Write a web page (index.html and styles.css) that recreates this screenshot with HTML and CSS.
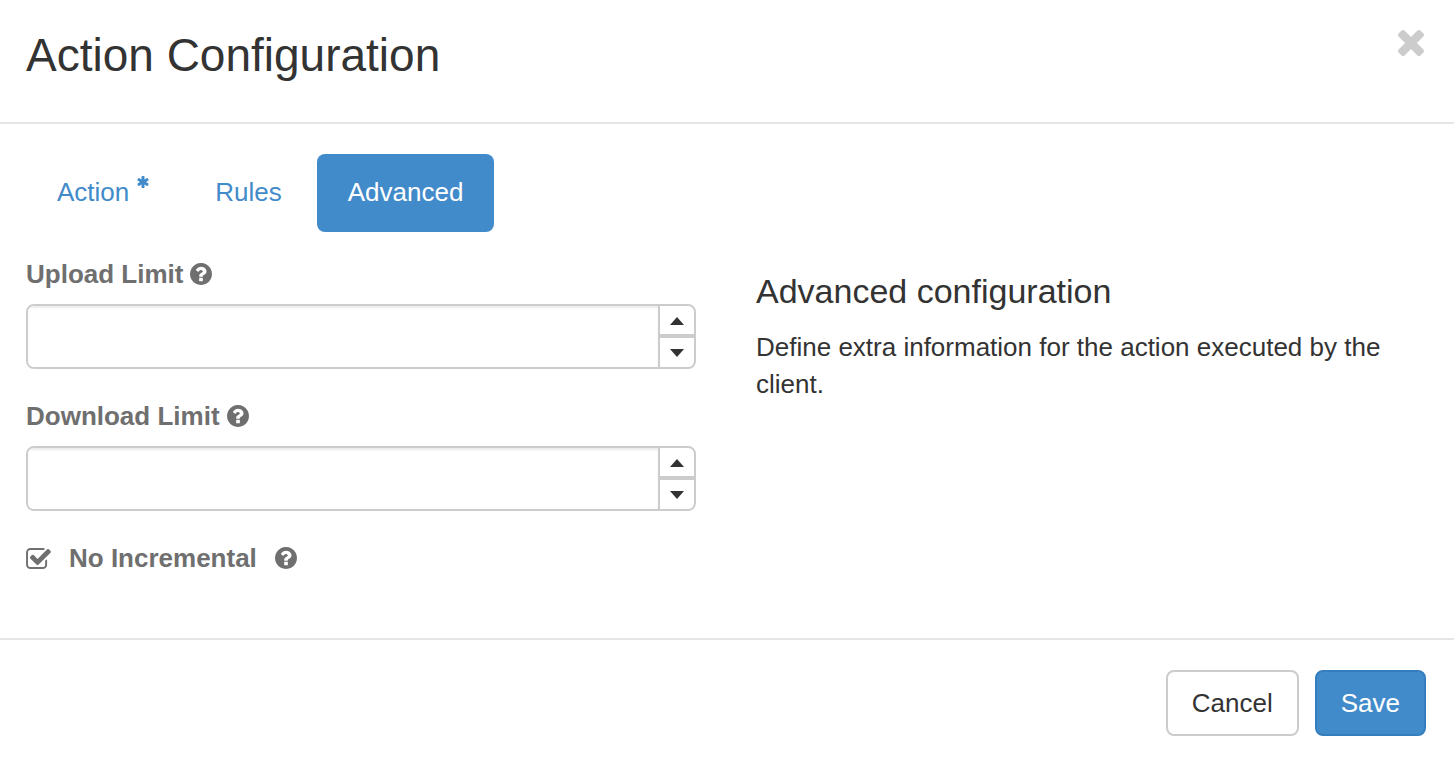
FILE: index.html
```html
<!DOCTYPE html>
<html lang="en">
<head>
    <meta charset="UTF-8">
    <meta name="viewport" content="width=device-width, initial-scale=1.0">
    <title>Action Configuration</title>
    <link rel="stylesheet" href="styles.css">
</head>
<body>
    <!-- shared icons -->
    <svg class="icon-defs" aria-hidden="true">
        <symbol id="icon-help" viewBox="128 128 1536 1536">
            <path d="M1024 1376v-192q0-14-9-23t-23-9h-192q-14 0-23 9t-9 23v192q0 14 9 23t23 9h192q14 0 23-9t9-23zm256-672q0-88-55.500-163t-138.500-116-170-41q-243 0-371 213-15 24 8 42l132 100q7 6 19 6 16 0 25-12 53-68 86-92 34-24 86-24 48 0 85.500 26t37.500 59q0 38-20 61t-68 45q-63 28-115.500 86.500t-52.500 125.500v36q0 14 9 23t23 9h192q14 0 23-9t9-23q0-19 21.500-49.500t54.500-49.500q32-18 49-28.500t46-35 44.500-48 28-60.500 12.500-81zm384 192q0 209-103 385.500t-279.500 279.500-385.500 103-385.500-103-279.500-279.500-103-385.500 103-385.500 279.500-279.500 385.500-103 385.500 103 279.500 279.500 103 385.500z"/>
        </symbol>
    </svg>

    <form class="modal">
        <header class="modal-header">
            <h1>Action Configuration</h1>
            <button type="button" class="close" aria-label="Close">
                <svg viewBox="302 366 1188 1188"><path d="M1490 1322q0 40-28 68l-136 136q-28 28-68 28t-68-28l-294-294-294 294q-28 28-68 28t-68-28l-136-136q-28-28-28-68t28-68l294-294-294-294q-28-28-28-68t28-68l136-136q28-28 68-28t68 28l294 294 294-294q28-28 68-28t68 28l136 136q28 28 28 68t-28 68l-294 294 294 294q28 28 28 68z"/></svg>
            </button>
        </header>

        <div class="modal-body">
            <nav class="tabs">
                <a href="#action">Action
                    <svg class="required" viewBox="128 128 1536 1536" role="img" aria-label="required"><path d="M1546 1050q46 26 59.500 77.500t-12.500 97.500l-64 110q-26 46-77.500 59.500t-97.500-12.500l-266-153v307q0 52-38 90t-90 38h-128q-52 0-90-38t-38-90v-307l-266 153q-46 26-97.500 12.500t-77.500-59.500l-64-110q-26-46-12.500-97.500t59.500-77.500l266-154-266-154q-46-26-59.500-77.500t12.500-97.500l64-110q26-46 77.500-59.500t97.500 12.500l266 153v-307q0-52 38-90t90-38h128q52 0 90 38t38 90v307l266-153q46-26 97.500-12.500t77.500 59.500l64 110q26 46 12.500 97.500t-59.500 77.500l-266 154z"/></svg>
                </a>
                <a href="#rules">Rules</a>
                <a href="#advanced" class="active" aria-current="page">Advanced</a>
            </nav>

            <div class="columns">
                <div class="fields">
                    <div class="field">
                        <div class="field-label">
                            <label for="upload-limit">Upload Limit</label>
                            <svg class="help"><use href="#icon-help"/></svg>
                        </div>
                        <div class="spinner">
                            <input type="text" id="upload-limit" inputmode="numeric">
                            <div class="spinner-buttons">
                                <button type="button" class="step-up" aria-label="Increase upload limit"><span class="caret caret-up"></span></button>
                                <button type="button" aria-label="Decrease upload limit"><span class="caret caret-down"></span></button>
                            </div>
                        </div>
                    </div>

                    <div class="field">
                        <div class="field-label">
                            <label for="download-limit">Download Limit</label>
                            <svg class="help"><use href="#icon-help"/></svg>
                        </div>
                        <div class="spinner">
                            <input type="text" id="download-limit" inputmode="numeric">
                            <div class="spinner-buttons">
                                <button type="button" class="step-up" aria-label="Increase download limit"><span class="caret caret-up"></span></button>
                                <button type="button" aria-label="Decrease download limit"><span class="caret caret-down"></span></button>
                            </div>
                        </div>
                    </div>

                    <div class="check-field">
                        <span class="checkbox">
                            <input type="checkbox" id="no-incremental" checked>
                            <svg viewBox="64 128 1664 1408">
                                <path d="M1472 930v318q0 119-84.500 203.500t-203.500 84.500h-832q-119 0-203.500-84.500t-84.500-203.500v-832q0-119 84.500-203.500t203.500-84.500h832q63 0 117 25 15 7 18 23 3 17-9 29l-49 49q-10 10-23 10-3 0-9-2-23-6-45-6h-832q-66 0-113 47t-47 113v832q0 66 47 113t113 47h832q66 0 113-47t47-113v-254q0-13 9-22l64-64q10-10 23-10 6 0 12 3 20 8 20 29z"/>
                                <path class="tick" d="M1703 441l-814 814q-24 24-57 24t-57-24l-430-430q-24-24-24-57t24-57l110-110q24-24 57-24t57 24l263 263 647-647q24-24 57-24t57 24l110 110q24 24 24 57t-24 57z"/>
                            </svg>
                        </span>
                        <label for="no-incremental">No Incremental</label>
                        <svg class="help"><use href="#icon-help"/></svg>
                    </div>
                </div>

                <aside class="info">
                    <h2>Advanced configuration</h2>
                    <p>Define extra information for the action executed by the client.</p>
                </aside>
            </div>
        </div>

        <footer class="modal-footer">
            <button type="button" class="btn">Cancel</button>
            <button type="submit" class="btn btn-primary">Save</button>
        </footer>
    </form>
</body>
</html>
```

FILE: styles.css
```css
* {
    box-sizing: border-box;
}

body {
    margin: 0;
    background-color: #fff;
    color: #333;
    font-family: "Liberation Sans", Arial, sans-serif;
    font-size: 26px;
    line-height: 37px;
}

button,
input {
    font: inherit;
    color: inherit;
}

button {
    cursor: pointer;
}

svg {
    display: block;
    fill: currentColor;
}

.icon-defs {
    display: none;
}

/* header */
.modal-header {
    display: flex;
    justify-content: space-between;
    align-items: flex-start;
    padding: 23px 30px 35px 26px;
    border-bottom: 2px solid #e5e5e5;
}

h1 {
    margin: 0;
    font-size: 46px;
    font-weight: normal;
    line-height: 64px;
}

.close {
    margin-top: 7px;
    padding: 0;
    border: none;
    background: none;
    color: #ccc;
}

.close svg {
    width: 26px;
    height: 26px;
}

/* body */
.modal-body {
    padding: 30px 28px 61px 26px;
}

.tabs {
    display: flex;
    gap: 4px;
}

.tabs a {
    display: flex;
    gap: 8px;
    padding: 19px 31px 21px;
    border-radius: 8px;
    color: #428bca;
    line-height: 38px;
    text-decoration: none;
}

.tabs .active {
    background-color: #428bca;
    color: #fff;
}

.required {
    width: 12px;
    height: 12px;
    margin-top: 3px;
}

.columns {
    display: grid;
    grid-template-columns: 1fr 1fr;
    gap: 60px;
    margin-top: 24px;
}

.field {
    margin-bottom: 29px;
}

.field-label,
.check-field {
    display: flex;
    align-items: center;
    color: #6f6f6f;
    font-weight: bold;
}

.field-label {
    gap: 7px;
    margin-bottom: 11px;
}

.check-field {
    gap: 18px;
}

.help {
    width: 22px;
    height: 22px;
    margin-bottom: 2px;
}

/* number inputs */
.spinner {
    display: flex;
    height: 65px;
    border: 2px solid #ccc;
    border-radius: 8px;
    overflow: hidden;
}

.spinner input {
    flex: 1;
    min-width: 0;
    padding: 12px 24px;
    border: none;
    outline: none;
    background: #fff;
    box-shadow: inset 0 2px 2px rgba(0, 0, 0, 0.075);
}

.spinner-buttons {
    display: grid;
    grid-template-rows: 28px 1fr;
    gap: 4px;
    width: 36px;
    border-left: 2px solid #ccc;
    background-color: #ccc;
}

.spinner-buttons button {
    display: flex;
    align-items: center;
    justify-content: center;
    padding: 0;
    border: none;
    background-color: #fff;
}

.spinner-buttons .step-up {
    padding-top: 2px;
}

.caret {
    border-left: 7px solid transparent;
    border-right: 7px solid transparent;
}

.caret-up {
    border-bottom: 8px solid #333;
}

.caret-down {
    border-top: 8px solid #333;
}

/* checkbox: the native box is hidden under the drawn one */
.checkbox {
    display: grid;
    width: 25px;
    height: 21px;
}

.checkbox input,
.checkbox svg {
    grid-area: 1 / 1;
    width: 100%;
    height: 100%;
    margin: 0;
}

.checkbox input {
    appearance: none;
}

.checkbox svg {
    pointer-events: none;
}

.checkbox input:not(:checked) + svg .tick {
    display: none;
}

/* info text */
.info {
    padding-top: 16px;
}

h2 {
    margin: 0 0 19px;
    font-size: 34px;
    font-weight: normal;
    line-height: 38px;
}

p {
    margin: 0;
}

/* footer */
.modal-footer {
    display: flex;
    justify-content: flex-end;
    gap: 16px;
    padding: 30px 28px 28px;
    border-top: 2px solid #e5e5e5;
}

.btn {
    padding: 12px 24px;
    border: 2px solid #ccc;
    border-radius: 8px;
    background-color: #fff;
    line-height: 38px;
}

.btn-primary {
    border-color: #357ebd;
    background-color: #428bca;
    color: #fff;
}
```
